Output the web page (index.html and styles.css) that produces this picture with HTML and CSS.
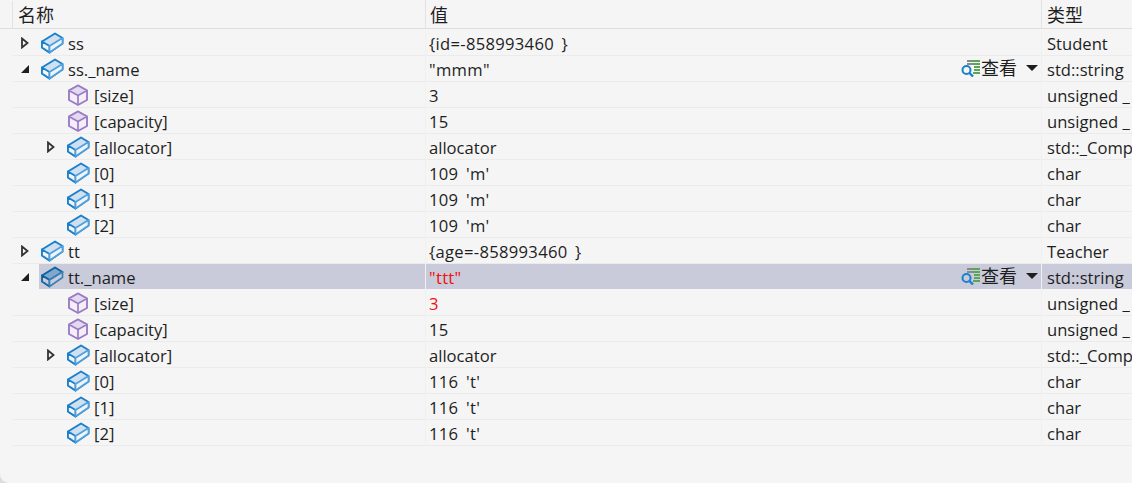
FILE: index.html
```html
<!DOCTYPE html>
<html lang="zh">
<head>
<meta charset="utf-8">
<title>监视</title>
<link rel="stylesheet" href="styles.css">
</head>
<body>
<svg class="defs" width="0" height="0" aria-hidden="true">
  <symbol id="obj" viewBox="0 0 24 24">
    <path d="M2 10.5 15 2.5 22.5 7 22.5 12.5 9.5 21.5 2 16.5Z" fill="#cfe0f0" stroke="#1b80cc" stroke-width="2" stroke-linejoin="round"/>
    <path d="M2 10.5 9.5 15 9.5 21.5 2 16.5Z" fill="#f5f5f5" stroke="#1b80cc" stroke-width="1.8" stroke-linejoin="round"/>
    <path d="M9.5 15 22.5 7 22.5 12.5 9.5 21.5Z" fill="#eef4fa" stroke="#4f9fdc" stroke-width="1.7" stroke-linejoin="round"/>
  </symbol>
  <symbol id="objsel" viewBox="0 0 24 24">
    <path d="M2 10.5 15 2.5 22.5 7 9.5 15Z" fill="#7fa8cc" stroke="#0f62a3" stroke-width="2" stroke-linejoin="round"/>
    <path d="M2 10.5 9.5 15 9.5 21.5 2 16.5Z" fill="#c9cbda" stroke="#0f62a3" stroke-width="1.8" stroke-linejoin="round"/>
    <path d="M9.5 15 22.5 7 22.5 12.5 9.5 21.5Z" fill="#c9cbda" stroke="#3c80b8" stroke-width="1.7" stroke-linejoin="round"/>
  </symbol>
  <symbol id="cube" viewBox="0 0 24 24">
    <path d="M12 2.5 21 7.5 21 17 12 22 3 17 3 7.5Z" fill="#f3eef8" stroke="#9a7cc6" stroke-width="1.9" stroke-linejoin="round"/>
    <path d="M12 2.5 21 7.5 12 12.5 3 7.5Z" fill="#e3d9f0" stroke="#9a7cc6" stroke-width="1.6" stroke-linejoin="round"/>
    <path d="M12 12.5V22" stroke="#9a7cc6" stroke-width="1.7"/>
  </symbol>
  <symbol id="closed" viewBox="0 0 10 12">
    <path d="M2 1.5 7.5 6 2 10.5Z" fill="#f5f5f5" stroke="#333" stroke-width="1.8"/>
  </symbol>
  <symbol id="open" viewBox="0 0 10 10">
    <path d="M9 1V9H1Z" fill="#1e1e1e"/>
  </symbol>
  <symbol id="viz" viewBox="0 0 20 18">
    <path d="M6 2H10M6 5H12" stroke="#8a8a8a" stroke-width="2"/>
    <path d="M10 2H19M12 5H19M13 8H19M13 11H19M12 14H19" stroke="#5aa55a" stroke-width="2"/>
    <circle cx="5.5" cy="11" r="4" fill="none" stroke="#1b80cc" stroke-width="2"/>
    <path d="M8.5 14 12 17.5" stroke="#1b80cc" stroke-width="2.4"/>
  </symbol>
</svg>
<main class="watch">
  <div class="row head">
    <div class="cell name"><span class="title">名称</span></div>
    <div class="cell value"><span class="title">值</span></div>
    <div class="cell type"><span class="title">类型</span></div>
  </div>

  <div class="row">
    <div class="cell name lv0"><svg class="tw tw-c"><use href="#closed"/></svg><svg class="ic"><use href="#obj"/></svg><span class="txt">ss</span></div>
    <div class="cell value"><span class="txt num">{id=-858993460 }</span></div>
    <div class="cell type"><span class="txt">Student</span></div>
  </div>
  <div class="row">
    <div class="cell name lv0"><svg class="tw tw-o"><use href="#open"/></svg><svg class="ic"><use href="#obj"/></svg><span class="txt">ss._name</span></div>
    <div class="cell value"><span class="txt num">"mmm"</span><span class="viewer"><svg class="viz"><use href="#viz"/></svg><span class="look">查看</span><i class="caret"></i></span></div>
    <div class="cell type"><span class="txt">std::string</span></div>
  </div>
  <div class="row">
    <div class="cell name lv1"><svg class="ic"><use href="#cube"/></svg><span class="txt">[size]</span></div>
    <div class="cell value"><span class="txt num">3</span></div>
    <div class="cell type"><span class="txt">unsigned _</span></div>
  </div>
  <div class="row">
    <div class="cell name lv1"><svg class="ic"><use href="#cube"/></svg><span class="txt">[capacity]</span></div>
    <div class="cell value"><span class="txt num">15</span></div>
    <div class="cell type"><span class="txt">unsigned _</span></div>
  </div>
  <div class="row">
    <div class="cell name lv1"><svg class="tw tw-c"><use href="#closed"/></svg><svg class="ic"><use href="#obj"/></svg><span class="txt">[allocator]</span></div>
    <div class="cell value"><span class="txt">allocator</span></div>
    <div class="cell type"><span class="txt">std::_Comp</span></div>
  </div>
  <div class="row">
    <div class="cell name lv1"><svg class="ic"><use href="#obj"/></svg><span class="txt">[0]</span></div>
    <div class="cell value"><span class="txt num">109 'm'</span></div>
    <div class="cell type"><span class="txt">char</span></div>
  </div>
  <div class="row">
    <div class="cell name lv1"><svg class="ic"><use href="#obj"/></svg><span class="txt">[1]</span></div>
    <div class="cell value"><span class="txt num">109 'm'</span></div>
    <div class="cell type"><span class="txt">char</span></div>
  </div>
  <div class="row">
    <div class="cell name lv1"><svg class="ic"><use href="#obj"/></svg><span class="txt">[2]</span></div>
    <div class="cell value"><span class="txt num">109 'm'</span></div>
    <div class="cell type"><span class="txt">char</span></div>
  </div>

  <div class="row">
    <div class="cell name lv0"><svg class="tw tw-c"><use href="#closed"/></svg><svg class="ic"><use href="#obj"/></svg><span class="txt">tt</span></div>
    <div class="cell value"><span class="txt num">{age=-858993460 }</span></div>
    <div class="cell type"><span class="txt">Teacher</span></div>
  </div>
  <div class="row selected">
    <div class="cell name lv0"><svg class="tw tw-o"><use href="#open"/></svg><svg class="ic"><use href="#objsel"/></svg><span class="txt">tt._name</span></div>
    <div class="cell value"><span class="txt num changed">"ttt"</span><span class="viewer"><svg class="viz"><use href="#viz"/></svg><span class="look">查看</span><i class="caret"></i></span></div>
    <div class="cell type"><span class="txt">std::string</span></div>
  </div>
  <div class="row">
    <div class="cell name lv1"><svg class="ic"><use href="#cube"/></svg><span class="txt">[size]</span></div>
    <div class="cell value"><span class="txt num changed">3</span></div>
    <div class="cell type"><span class="txt">unsigned _</span></div>
  </div>
  <div class="row">
    <div class="cell name lv1"><svg class="ic"><use href="#cube"/></svg><span class="txt">[capacity]</span></div>
    <div class="cell value"><span class="txt num">15</span></div>
    <div class="cell type"><span class="txt">unsigned _</span></div>
  </div>
  <div class="row">
    <div class="cell name lv1"><svg class="tw tw-c"><use href="#closed"/></svg><svg class="ic"><use href="#obj"/></svg><span class="txt">[allocator]</span></div>
    <div class="cell value"><span class="txt">allocator</span></div>
    <div class="cell type"><span class="txt">std::_Comp</span></div>
  </div>
  <div class="row">
    <div class="cell name lv1"><svg class="ic"><use href="#obj"/></svg><span class="txt">[0]</span></div>
    <div class="cell value"><span class="txt num">116 't'</span></div>
    <div class="cell type"><span class="txt">char</span></div>
  </div>
  <div class="row">
    <div class="cell name lv1"><svg class="ic"><use href="#obj"/></svg><span class="txt">[1]</span></div>
    <div class="cell value"><span class="txt num">116 't'</span></div>
    <div class="cell type"><span class="txt">char</span></div>
  </div>
  <div class="row">
    <div class="cell name lv1"><svg class="ic"><use href="#obj"/></svg><span class="txt">[2]</span></div>
    <div class="cell value"><span class="txt num">116 't'</span></div>
    <div class="cell type"><span class="txt">char</span></div>
  </div>
</main>
</body>
</html>
```
FILE: styles.css
```css
html, body {
  margin: 0;
  height: 100%;
  overflow: hidden;
  background: #dcdce4;
}
.defs { display: block; height: 0; }
.watch {
  height: 483px;
  box-sizing: border-box;
  background: #f5f5f5;
  border-bottom-left-radius: 9px;
  font: 16.6px/26px "Open Sans", "Noto Sans CJK SC", sans-serif;
  color: #1e1e1e;
  overflow: hidden;
}
.row {
  display: grid;
  grid-template-columns: 412px 616px 91px;
  grid-template-rows: minmax(0, 1fr);
  height: 26px;
  margin-left: 13px;
  box-shadow: inset 0 -1px 0 #ebebeb;
}
.cell {
  display: flex;
  align-items: center;
  white-space: nowrap;
  min-width: 0;
  min-height: 0;
  box-sizing: border-box;
}
.txt { position: relative; top: 1px; }
.num { letter-spacing: .3px; word-spacing: 3px; }
.head {
  height: 29px;
  margin-bottom: 1px;
  margin-left: 0;
  grid-template-columns: 425px 616px 91px;
  box-shadow: inset 0 -1px 0 #dedede;
}
.head .cell { border-left: 1px solid #e2e2e2; padding-left: 5px; padding-bottom: 1px; }
.head .name { border-left: 0; padding-left: 12px; padding-bottom: 0; }
.head .name .title { border-left: 1px solid #e2e2e2; padding-left: 5px; padding-bottom: 1px; }
.title { font: 18px/27px "Noto Sans CJK SC", sans-serif; }
.value, .type { padding-left: 3px; border-left: 1px solid #f0f0f0; }
.head .value { padding-left: 4px; }
.value { justify-content: space-between; padding-right: 3px; }
.type { padding-left: 5px; }
.lv0 { padding-left: 27px; }
.lv1 { padding-left: 53px; }
.tw { flex: none; }
.tw-c { width: 10px; height: 12px; margin-left: -20px; margin-right: 10px; }
.tw-o { width: 10px; height: 10px; margin-left: -20px; margin-right: 10px; }
.ic { width: 24px; height: 24px; flex: none; margin-right: 4px; }
.viewer { display: flex; align-items: center; flex: none; margin-bottom: 2px; }
.viz { width: 20px; height: 18px; flex: none; }
.look { font: 18px/24px "Noto Sans CJK SC", sans-serif; margin: 0 9px 2px 0; }
.caret {
  width: 0;
  height: 0;
  border-left: 6.5px solid transparent;
  border-right: 6.5px solid transparent;
  border-top: 6px solid #1e1e1e;
}
.changed { color: #f01010; }
.selected {
  background: #c9cbda;
  margin-left: 39px;
  grid-template-columns: 386px 616px 91px;
  box-shadow: none;
  height: 25px;
  margin-bottom: 1px;
}
.selected .lv0 { padding-left: 1px; }
.selected .value, .selected .type { border-left: 1px solid #f0f0f0; }
```
